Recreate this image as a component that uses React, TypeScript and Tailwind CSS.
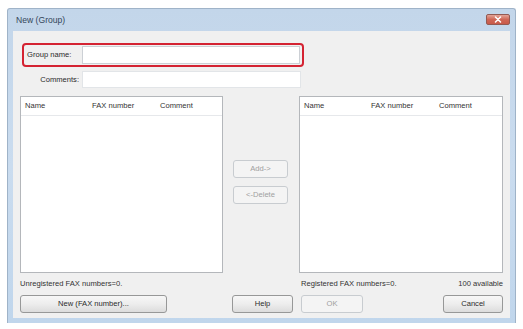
import React from "react";

const font = { fontFamily: '"Liberation Sans", Arial, sans-serif' };

function Btn({ children, w, disabled, className = "" }: { children: React.ReactNode; w: string; disabled?: boolean; className?: string }) {
  return (
    <div
      className={`${w} h-[18px] flex items-center justify-center rounded-[3px] border text-[7.6px] ${
        disabled
          ? "border-[#c8ccd0] bg-[#f4f4f4] text-[#a0a0a0]"
          : "border-[#979898] bg-gradient-to-b from-[#f7f7f7] via-[#ededed] to-[#dcdcdc] text-[#2a2a2a]"
      } ${className}`}
    >
      {children}
    </div>
  );
}

function List({ w }: { w: string }) {
  return (
    <div className={`${w} h-[177px] border border-[#b4b7bb] bg-white flex flex-col`}>
      <div className="h-[19px] flex items-center border-b border-[#e6e8eb] text-[7.6px] text-[#333333]">
        <div className="w-[67px] pl-[4px]">Name</div>
        <div className="w-[68px] pl-[4px]">FAX number</div>
        <div className="flex-1 pl-[4px]">Comment</div>
      </div>
    </div>
  );
}

export default function App() {
  return (
    <div className="w-[523px] h-[329px] bg-white pt-[8px] pl-[7px]" style={font}>
      <div className="w-[509px] h-[315px] rounded-t-[3px] bg-gradient-to-b from-[#c3d6ea] via-[#cadcef] to-[#c0d6ec] border-l border-t border-r border-[#9fb3c8] flex flex-col">
        <div className="h-[22px] flex items-center justify-between pl-[8px] pr-[5px]">
          <span className="text-[8.6px] text-[#34465a]">New (Group)</span>
          <div className="w-[24px] h-[11px] rounded-[2px] border border-[#935a53] bg-gradient-to-b from-[#e2a497] via-[#cf6656] to-[#c85a4a] flex items-center justify-center mt-[-2px]">
            <svg width="8" height="7" viewBox="0 0 8 7">
              <path d="M1.5 1 L6.5 6 M6.5 1 L1.5 6" stroke="#ffffff" strokeWidth="1.5" strokeLinecap="round" />
            </svg>
          </div>
        </div>
        <div className="mx-[5px] mb-[5px] flex-1 bg-[#f0f0f0] pt-[12px] px-[7px] flex flex-col text-[#2a2a2a]">
          <div className="ml-[2px] w-[282px] h-[24px] border-2 border-[#d42332] rounded-[4px] flex items-center">
            <div className="w-[58px] pl-[3px] text-[7.6px]">Group name:</div>
            <div className="w-[218px] h-[18px] bg-white border border-[#ccd0d5]" />
          </div>
          <div className="mt-[4px] h-[17px] flex items-center">
            <div className="w-[59px] text-right text-[7.6px]">Comments:</div>
            <div className="ml-[3px] w-[219px] h-[17px] bg-white border border-[#e2e5e8]" />
          </div>
          <div className="mt-[8px] flex">
            <List w="w-[203px]" />
            <div className="w-[76px] flex flex-col pl-[10px] pt-[64px]">
              <Btn w="w-[55px]" disabled>Add-&gt;</Btn>
              <Btn w="w-[55px]" disabled className="mt-[8px]">&lt;-Delete</Btn>
            </div>
            <List w="w-[204px]" />
          </div>
          <div className="mt-[6px] h-[10px] flex text-[7.6px] leading-[10px] text-[#333333]">
            <div className="w-[279px]">Unregistered FAX numbers=0.</div>
            <div className="w-[204px] flex justify-between pl-[2px]">
              <span>Registered FAX numbers=0.</span>
              <span>100 available</span>
            </div>
          </div>
          <div className="mt-[6px] flex">
            <Btn w="w-[147px]">New (FAX number)...</Btn>
            <Btn w="w-[61px]" className="ml-[65px]">Help</Btn>
            <Btn w="w-[62px]" disabled className="ml-[8px]">OK</Btn>
            <Btn w="w-[60px]" className="ml-[80px]">Cancel</Btn>
          </div>
        </div>
      </div>
    </div>
  );
}
